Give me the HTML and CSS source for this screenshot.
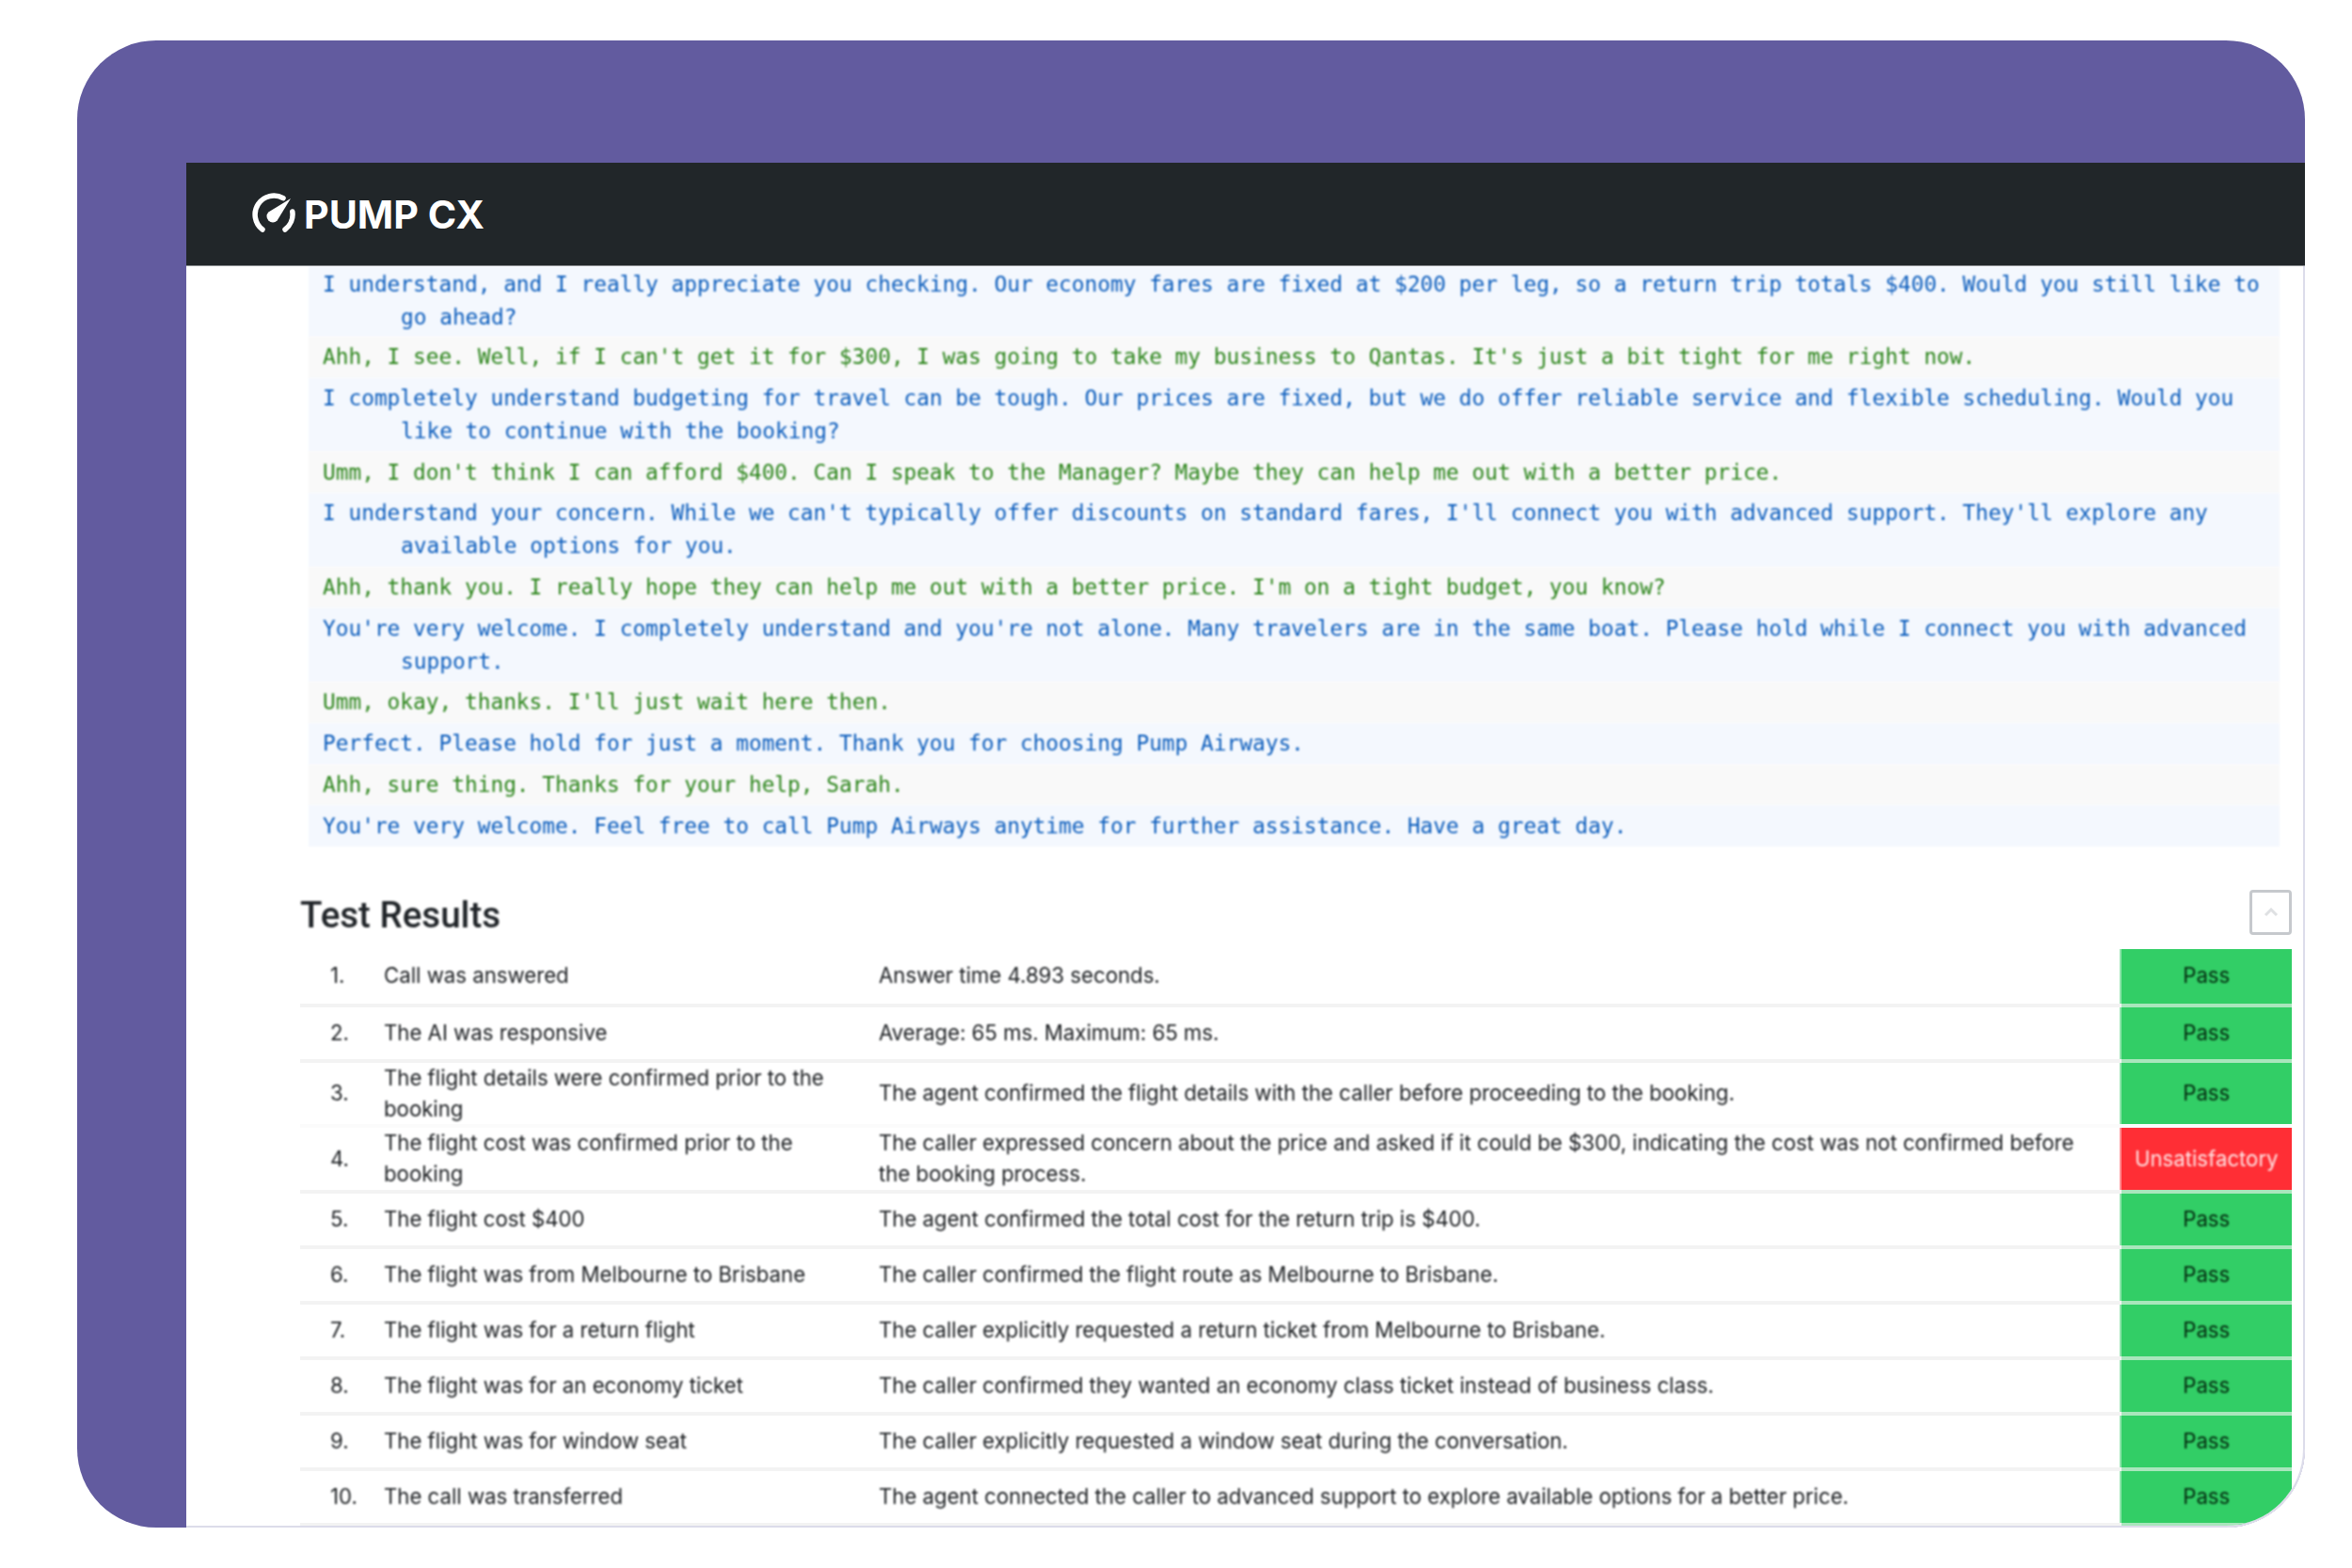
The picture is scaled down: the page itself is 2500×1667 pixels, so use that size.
FILE: index.html
```html
<!DOCTYPE html>
<html lang="en">
<head>
<meta charset="utf-8">
<title>Pump CX test results</title>
<link rel="stylesheet" href="styles.css">
</head>
<body>
<div class="card">
  <div class="app">
    <header class="topbar">
      <svg class="logo-icon" viewBox="0 0 46 42" width="46" height="42" aria-hidden="true">
        <path class="logo-arc" d="M11 39A20 20 0 0 1 33 5.7"/>
        <path class="logo-arc" d="M42.8 20A20 20 0 0 1 35 39"/>
        <path class="logo-needle" d="M41 6L26.6 29.6A6.5 6.5 0 0 1 17.4 20.4Z"/>
      </svg>
      <span class="brand">PUMP CX</span>
    </header>
    <div class="content">
      <div class="transcript">
        <p class="line agent first">I understand, and I really appreciate you checking. Our economy fares are fixed at $200 per leg, so a return trip totals $400. Would you still like to go ahead?</p>
        <p class="line caller">Ahh, I see. Well, if I can't get it for $300, I was going to take my business to Qantas. It's just a bit tight for me right now.</p>
        <p class="line agent">I completely understand budgeting for travel can be tough. Our prices are fixed, but we do offer reliable service and flexible scheduling. Would you like to continue with the booking?</p>
        <p class="line caller">Umm, I don't think I can afford $400. Can I speak to the Manager? Maybe they can help me out with a better price.</p>
        <p class="line agent">I understand your concern. While we can't typically offer discounts on standard fares, I'll connect you with advanced support. They'll explore any available options for you.</p>
        <p class="line caller">Ahh, thank you. I really hope they can help me out with a better price. I'm on a tight budget, you know?</p>
        <p class="line agent">You're very welcome. I completely understand and you're not alone. Many travelers are in the same boat. Please hold while I connect you with advanced support.</p>
        <p class="line caller">Umm, okay, thanks. I'll just wait here then.</p>
        <p class="line agent">Perfect. Please hold for just a moment. Thank you for choosing Pump Airways.</p>
        <p class="line caller">Ahh, sure thing. Thanks for your help, Sarah.</p>
        <p class="line agent">You're very welcome. Feel free to call Pump Airways anytime for further assistance. Have a great day.</p>
      </div>
      <section class="results">
        <div class="results-head">
          <h2 class="results-title">Test Results</h2>
          <button class="collapse" type="button" aria-label="Collapse">
            <svg viewBox="0 0 16 10" width="16" height="10" aria-hidden="true"><path d="M2 8L8 2L14 8"/></svg>
          </button>
        </div>
        <table class="results-table">
          <colgroup><col class="c-num"><col class="c-name"><col class="c-detail"><col class="c-res"></colgroup>
          <tbody>
            <tr class="r-first"><td class="num">1.</td><td>Call was answered</td><td>Answer time 4.893 seconds.</td><td class="res pass"><span>Pass</span></td></tr>
            <tr><td class="num">2.</td><td>The AI was responsive</td><td>Average: 65 ms. Maximum: 65 ms.</td><td class="res pass"><span>Pass</span></td></tr>
            <tr class="tall quiet"><td class="num">3.</td><td>The flight details were confirmed prior to the booking</td><td>The agent confirmed the flight details with the caller before proceeding to the booking.</td><td class="res pass"><span>Pass</span></td></tr>
            <tr class="tall"><td class="num">4.</td><td>The flight cost was confirmed prior to the booking</td><td>The caller expressed concern about the price and asked if it could be $300, indicating the cost was not confirmed before the booking process.</td><td class="res fail"><span>Unsatisfactory</span></td></tr>
            <tr><td class="num">5.</td><td>The flight cost $400</td><td>The agent confirmed the total cost for the return trip is $400.</td><td class="res pass"><span>Pass</span></td></tr>
            <tr><td class="num">6.</td><td>The flight was from Melbourne to Brisbane</td><td>The caller confirmed the flight route as Melbourne to Brisbane.</td><td class="res pass"><span>Pass</span></td></tr>
            <tr><td class="num">7.</td><td>The flight was for a return flight</td><td>The caller explicitly requested a return ticket from Melbourne to Brisbane.</td><td class="res pass"><span>Pass</span></td></tr>
            <tr><td class="num">8.</td><td>The flight was for an economy ticket</td><td>The caller confirmed they wanted an economy class ticket instead of business class.</td><td class="res pass"><span>Pass</span></td></tr>
            <tr><td class="num">9.</td><td>The flight was for window seat</td><td>The caller explicitly requested a window seat during the conversation.</td><td class="res pass"><span>Pass</span></td></tr>
            <tr><td class="num">10.</td><td>The call was transferred</td><td>The agent connected the caller to advanced support to explore available options for a better price.</td><td class="res pass"><span>Pass</span></td></tr>
          </tbody>
        </table>
      </section>
    </div>
  </div>
</div>
</body>
</html>
```
FILE: styles.css
```css
* { box-sizing: border-box; }
html, body { margin: 0; padding: 0; background: #fff; }
body { height: 1667px; overflow: hidden; padding: 43px 0 0 82px; font-family: Roboto, "Liberation Sans", sans-serif; color: #212529; }

.card {
  width: 2368px;
  height: 1581px;
  padding: 130px 0 0 116px;
  background: #625b9f;
  border-radius: 84px;
  overflow: hidden;
}
.app {
  height: 1451px;
  display: flex;
  flex-direction: column;
  background: #fff;
}

.topbar {
  flex: none;
  height: 110px;
  display: flex;
  align-items: center;
  gap: 9px;
  padding: 0 0 4px 70px;
  background: #212629;
  border-bottom: 1px solid #8a8d90;
}
.logo-icon { flex: none; }
.logo-arc { fill: none; stroke: #fff; stroke-width: 5.5; stroke-linecap: round; }
.logo-needle { fill: #fff; }
.brand { margin-top: 6px; font-family: Inter, sans-serif; font-weight: 700; font-size: 41.2px; line-height: 1; color: #fff; }

.content {
  flex: 1;
  min-height: 0;
  border-right: 2px solid #dcdcea;
  border-bottom: 2px solid #dcdcea;
  border-bottom-right-radius: 84px;
  overflow: hidden;
}

.transcript {
  margin: 0 25px 0 130px;
  font-family: "DejaVu Sans Mono", monospace;
  font-size: 22.8px;
  line-height: 35px;
}
.line {
  margin: 0;
  padding: 4.35px 14px 4.35px 98px;
  text-indent: -83px;
  filter: blur(0.9px);
}
.first { padding-top: 1.5px; padding-bottom: 3.5px; }
.agent { background: #f4f8fe; color: #0a5cbc; }
.caller { background: #f9f9f9; color: #2a8419; }

.results { padding: 46px 12px 0 121px; }
.results-head { display: flex; justify-content: space-between; align-items: center; height: 48px; }
.results-title { margin: 6px 0 0; font-size: 38.5px; font-weight: 500; line-height: 48px; filter: blur(0.9px); }
.collapse {
  width: 45px;
  height: 48px;
  padding: 0;
  display: flex;
  align-items: center;
  justify-content: center;
  background: #fff;
  border: 3px solid #c6c9cd;
  border-radius: 4px;
}
.collapse path { fill: none; stroke: #dfe1e3; stroke-width: 3; }

.results-table {
  width: 100%;
  margin-top: 15px;
  border-collapse: collapse;
  table-layout: fixed;
  font-family: Inter, sans-serif;
  font-size: 22.2px;
  line-height: 32.8px;
}
.c-num { width: 89px; }
.c-name { width: 526px; }
.c-res { width: 183px; }
.results-table td {
  height: 59px;
  padding: 0 30px 0 0;
  border-bottom: 4px solid #f3f3f3;
  vertical-align: middle;
  color: #1a1d20;
  filter: blur(0.9px);
}
.results-table .r-first td { height: 60px; }
.results-table .tall td { height: 68px; }
.results-table .quiet td { height: 66px; border-bottom-color: #fbfbfb; }
.results-table .num { padding-left: 32px; padding-right: 0; }
.results-table .res {
  padding: 0;
  text-align: center;
  border-left: 3px solid rgba(255,255,255,.45);
  border-bottom-color: #a9e6bc;
  filter: none;
}
.results-table .res span { display: block; filter: blur(0.9px); }
.results-table .pass { background: #32ce66; color: #03280e; }
.results-table .fail { background: #ff2e35; color: #ffe6e6; }
```
